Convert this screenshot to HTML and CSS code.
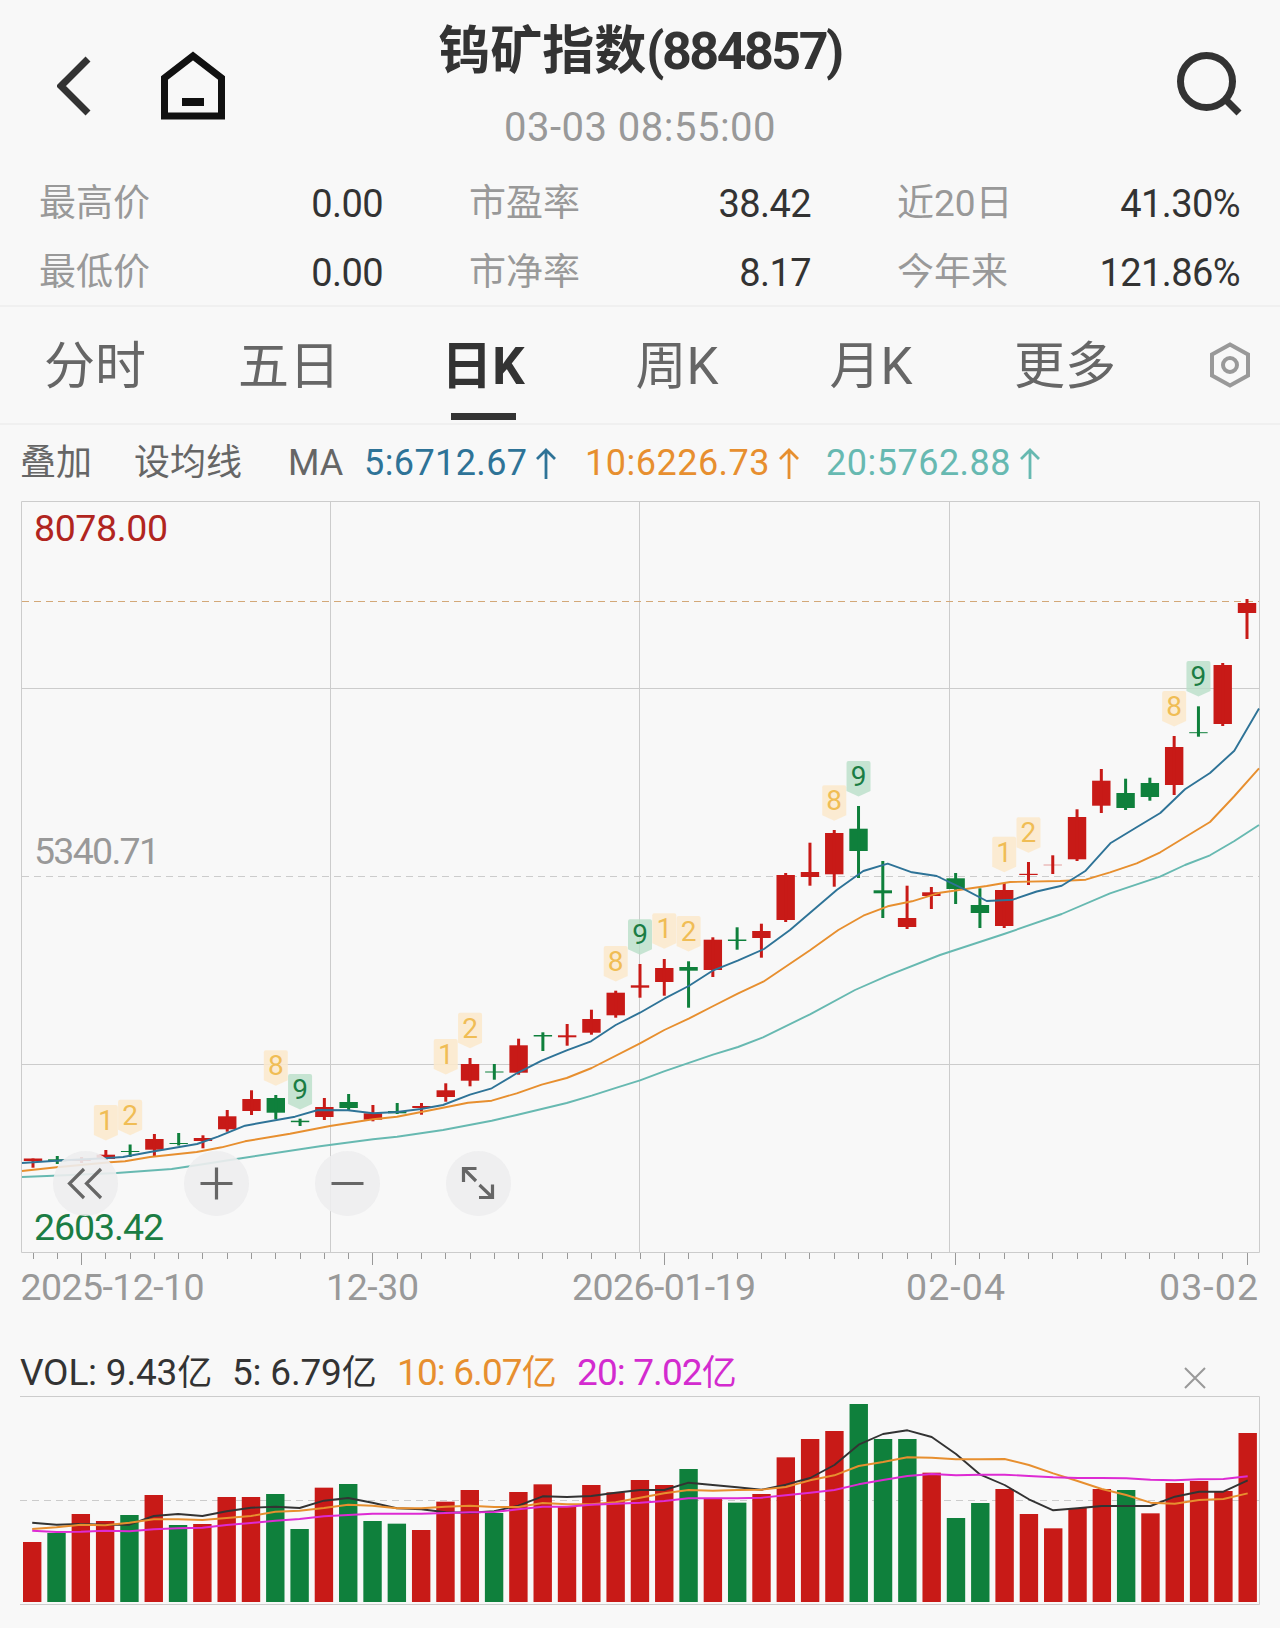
FILE: index.html
```
<!DOCTYPE html>
<html lang="zh-CN">
    <head>
        <meta charset="utf-8" />
        <meta name="viewport" content="width=device-width, initial-scale=1" />
        <title>钨矿指数(884857)</title>
        <link rel="stylesheet" href="styles.css">
    </head>
    <body>
        <div class="header">
            <div class="nav">
                <svg class="back" width="36" height="60" viewBox="0 0 36 60"><path d="M31 3 L4 30 L31 57" /></svg>
                <svg class="home" width="66" height="70" viewBox="0 0 66 70"><path d="M4.5 65 V27 L33 5 L61.5 27 V65 Z" /><path class="door" d="M22 51 H44" /></svg>
            </div>
            <div class="heading">
                <h1>钨矿指数<span>(884857)</span></h1>
                <div class="time">03-03 08:55:00</div>
            </div>
            <svg class="search" width="68" height="68" viewBox="0 0 68 68"><circle cx="30.5" cy="30.5" r="26" /><path d="M49 48 L63 62" /></svg>
        </div>
        <div class="stats">
            <div class="stat"><span>最高价</span><b>0.00</b></div>
            <div class="stat"><span>市盈率</span><b>38.42</b></div>
            <div class="stat"><span>近20日</span><b>41.30%</b></div>
            <div class="stat"><span>最低价</span><b>0.00</b></div>
            <div class="stat"><span>市净率</span><b>8.17</b></div>
            <div class="stat"><span>今年来</span><b>121.86%</b></div>
        </div>
        <div class="tabs">
            <div class="tab">分时</div>
            <div class="tab">五日</div>
            <div class="tab active">日K</div>
            <div class="tab">周K</div>
            <div class="tab">月K</div>
            <div class="tab">更多</div>
            <svg class="setting" width="42" height="46" viewBox="0 0 42 46"><path d="M21 2.5 L39 12.5 V33.5 L21 43.5 L3 33.5 V12.5 Z" /><circle cx="21" cy="23" r="7" /></svg>
        </div>
        <div class="ma-row">
            <span>叠加</span>
            <span>设均线</span>
            <span>MA</span>
            <span class="ma5">5:6712.67<svg class="arrow" width="20" height="32" viewBox="0 0 20 32"><path d="M10 31 V2 M1 11 L10 2 L19 11" /></svg></span>
            <span class="ma10">10:6226.73<svg class="arrow" width="20" height="32" viewBox="0 0 20 32"><path d="M10 31 V2 M1 11 L10 2 L19 11" /></svg></span>
            <span class="ma20">20:5762.88<svg class="arrow" width="20" height="32" viewBox="0 0 20 32"><path d="M10 31 V2 M1 11 L10 2 L19 11" /></svg></span>
        </div>
        <div class="chart">
            <svg width="1280" height="820" viewBox="0 500 1280 820">
                <g class="grid">
                    <path d="M21.5 501.5 H1259.5 V1252.5 H21.5 Z M330.5 502 V1252 M639.5 502 V1252 M949.5 502 V1252 M22 688.5 H1259 M22 1064.5 H1259" />
                    <path class="dash" d="M22 876.5 H1259" />
                    <path class="dash now" d="M22 601.5 H1259" />
                </g>
                <g id="ticks"></g>
                <g id="candles"></g>
                <g id="lines"></g>
                <g id="marks"></g>
                <g class="price">
                    <text class="up" x="34" y="541" textLength="134">8078.00</text>
                    <text x="34" y="864" textLength="126">5340.71</text>
                    <text class="down" x="34" y="1240" textLength="130">2603.42</text>
                </g>
                <g class="dates">
                    <text x="20.5" y="1300" textLength="184">2025-12-10</text>
                    <text x="326" y="1300" textLength="93">12-30</text>
                    <text x="572" y="1300" textLength="184">2026-01-19</text>
                    <text x="906" y="1300" textLength="99">02-04</text>
                    <text x="1159" y="1300" textLength="99">03-02</text>
                </g>
                <g class="tool">
                    <circle cx="85.5" cy="1183.5" r="32.5" />
                    <path d="M84 1169 L69.5 1183.5 L84 1198 M101 1169 L86.5 1183.5 L101 1198" />
                    <circle cx="216.5" cy="1183.5" r="32.5" />
                    <path d="M200.5 1183.5 H232.5 M216.5 1167.5 V1199.5" />
                    <circle cx="347.5" cy="1183.5" r="32.5" />
                    <path d="M331.5 1183.5 H363.5" />
                    <circle cx="478.5" cy="1183.5" r="32.5" />
                    <path d="M476.5 1168.5 H463.5 V1182 M463.5 1168.5 L476 1181 M479.5 1185 L492.5 1197.5 M479 1197.5 H492.5 V1184.5" />
                </g>
            </svg>
        </div>
        <div class="vol-row">
            <span>VOL: 9.43<i>亿</i></span>
            <span>5: 6.79<i>亿</i></span>
            <span class="ma10">10: 6.07<i>亿</i></span>
            <span class="vol20">20: 7.02<i>亿</i></span>
            <svg class="close" width="22" height="22" viewBox="0 0 22 22"><path d="M1 1 L21 21 M21 1 L1 21" /></svg>
        </div>
        <div class="volume">
            <svg width="1280" height="215" viewBox="0 1393 1280 215">
                <g class="grid">
                    <path d="M20 1396.5 H1259.5 V1604.5 H20" />
                    <path class="dash" d="M20 1500.5 H1259" />
                </g>
                <g id="bars"></g>
                <g id="vlines"></g>
            </svg>
        </div>
        <script src="chart.js"></script>
    </body>
</html>
```

FILE: styles.css
```
*{
    box-sizing: border-box;
    padding: 0;
    margin: 0;
}
body{
    width: 1280px;
    height: 1628px;
    overflow: hidden;
    background: #f8f8f8;
    color: #333;
    font-family: Roboto, "Noto Sans CJK SC", sans-serif;
    font-size: 37px;
}
svg{
    display: block;
    fill: none;
}
.header{
    height: 168px;
    display: grid;
    grid-template-columns: 400px 480px 400px;
}
.nav{
    display: flex;
    padding: 51px 0 0 57px;
}
.back{
    margin-top: 5px;
    stroke: #333;
    stroke-width: 7;
}
.home{
    margin-left: 67px;
    stroke: #111;
    stroke-width: 7;
}
.door{
    stroke-width: 8;
}
.search{
    justify-self: end;
    margin: 51px 36px 0 0;
    stroke: #333;
    stroke-width: 7;
}
.heading{
    text-align: center;
}
.heading h1{
    height: 100px;
    line-height: 104px;
    font-size: 52px;
    font-weight: bold;
    white-space: nowrap;
}
.heading h1 span{
    letter-spacing: -2.5px;
}
.time{
    height: 52px;
    line-height: 56px;
    font-size: 40px;
    color: #999;
    letter-spacing: 0.5px;
}
.stats{
    height: 139px;
    display: grid;
    grid-template-columns: 344px 342px 343px;
    column-gap: 86px;
    grid-auto-rows: 69px;
    padding-left: 39px;
    border-bottom: 2px solid #f0f0f0;
}
.stat{
    display: flex;
    justify-content: space-between;
    line-height: 70px;
}
.stat span{
    padding-top: 1px;
    color: #999;
}
.stat b{
    padding-top: 1px;
    font-weight: normal;
    font-size: 38px;
    letter-spacing: -0.6px;
}
.tabs{
    height: 118px;
    display: grid;
    grid-template-columns: repeat(6, 194px) 1fr;
    margin-left: -2px;
    border-bottom: 2px solid #f0f0f0;
}
.tab{
    display: flex;
    flex-direction: column;
    align-items: center;
    height: 116px;
    line-height: 119px;
    font-size: 51px;
    color: #666;
}
.active{
    color: #333;
    font-weight: bold;
}
.active::after{
    content: "";
    width: 65px;
    height: 7px;
    margin-top: -13px;
    background: #333;
}
.setting{
    margin: 35px 0 0 47px;
    stroke: #999;
    stroke-width: 4;
}
.ma-row{
    height: 75px;
    display: grid;
    grid-template-columns: 114px 154px 76px 221px 241px 1fr;
    padding-left: 20px;
    line-height: 77px;
    font-size: 36px;
    color: #666;
}
.ma-row span{
    display: flex;
    align-items: center;
    white-space: nowrap;
}
.arrow{
    margin-left: 9px;
    stroke: currentColor;
    stroke-width: 2.8;
}
.ma-row .ma5{
    color: #2e7397;
    letter-spacing: 0.4px;
}
.ma-row .ma10, .vol-row .ma10{
    color: #e78f2f;
}
.ma-row .ma10, .ma-row .ma20{
    letter-spacing: 0.5px;
}
.ma-row .ma20{
    color: #67b9b1;
}
.grid path{
    stroke: #ccc;
}
.grid .dash{
    stroke-dasharray: 7 5;
}
.grid .now{
    stroke: #d3a878;
}
.tick{
    stroke: #999;
}
.red{
    fill: #c81a17;
}
.green{
    fill: #0f803c;
}
.line{
    stroke-width: 1.9;
    stroke-linejoin: round;
}
.l5{
    stroke: #2e7397;
}
.l10{
    stroke: #e78f2f;
}
.l20{
    stroke: #67b9b1;
}
.v5{
    stroke: #333;
}
.v20{
    stroke: #dd2bd3;
}
.mark{
    fill: #fbe9cb;
    fill-opacity: .85;
}
.mark-nine{
    fill: #b9dec8;
    fill-opacity: .8;
}
.num{
    font-size: 28px;
    text-anchor: middle;
    fill: #f0bd55;
}
.num-nine{
    fill: #1b7d44;
}
.price{
    font-size: 37.5px;
    fill: #999;
}
.price .up{
    fill: #b1251f;
}
.price .down{
    fill: #1b7d44;
}
.dates{
    font-size: 37.5px;
    fill: #999;
}
.tool circle{
    fill: #ededee;
    fill-opacity: .9;
}
.tool path{
    stroke: #666;
    stroke-width: 3.2;
}
.vol-row{
    height: 73px;
    display: grid;
    grid-template-columns: 212px 165px 180px 607px 1fr;
    padding-left: 20px;
    line-height: 105px;
    font-size: 37px;
}
.vol-row span{
    white-space: nowrap;
    letter-spacing: -0.2px;
}
.vol-row i{
    font-style: normal;
    font-size: 35px;
}
.vol-row .ma10{
    letter-spacing: -0.9px;
}
.vol-row .vol20{
    color: #d32bcf;
    letter-spacing: -0.9px;
}
.close{
    margin-top: 47px;
    stroke: #999;
    stroke-width: 2;
}
```

FILE: chart.js
```
// color, body top, body bottom, high, low
const candles = [
    ['r', 1158.5, 1161, 1158.5, 1167.7], ['g', 1159.3, 1161.3, 1156, 1164], ['r', 1159, 1161, 1157, 1163],
    ['r', 1154.7, 1159, 1150, 1160], ['g', 1151, 1152, 1144.5, 1157], ['r', 1139, 1149.7, 1134, 1156],
    ['g', 1143, 1144, 1133, 1145.5], ['r', 1138, 1141, 1135.3, 1148.3], ['r', 1116.3, 1129.3, 1110, 1131.7],
    ['r', 1099, 1111, 1090.3, 1115], ['g', 1098, 1112.7, 1095, 1119.3], ['g', 1120.7, 1122.2, 1118.7, 1126],
    ['r', 1107, 1117, 1098, 1120], ['g', 1102, 1108, 1094, 1110], ['r', 1113.3, 1119.7, 1105, 1121.3],
    ['g', 1111, 1113.3, 1103, 1114], ['r', 1106, 1108, 1103, 1114.7], ['r', 1090.3, 1097, 1083.3, 1101.7],
    ['r', 1064, 1080.7, 1058, 1086.3], ['g', 1071.5, 1072.5, 1064, 1079.7], ['r', 1045.3, 1072.7, 1038.7, 1074.7],
    ['g', 1035, 1036.5, 1032.3, 1051], ['r', 1035.3, 1037.3, 1024, 1045.7], ['r', 1019, 1032.7, 1009.7, 1034.7],
    ['r', 992.7, 1015.3, 990.7, 1017.7], ['r', 985.3, 987.7, 964, 997.7], ['r', 968, 982, 959, 995.7],
    ['g', 967, 970.7, 961.3, 1007.7], ['r', 939.7, 970, 937.3, 977], ['g', 939.5, 941, 927.3, 949.7],
    ['r', 931, 938, 923.7, 957.7], ['r', 875, 920, 873, 922], ['r', 872, 877, 842.7, 885.7],
    ['r', 833, 874.3, 830, 886.7], ['g', 828.7, 851, 806, 878], ['g', 890.3, 893.3, 861, 918],
    ['r', 918, 927, 885.7, 929], ['r', 892.3, 896, 887, 909], ['g', 878.3, 889, 873, 904],
    ['g', 905, 913, 888.3, 928], ['r', 890, 926, 883, 928], ['r', 873.8, 875, 862, 885],
    ['r', 864.8, 865.2, 855.3, 874], ['r', 817, 859.3, 809.3, 861], ['r', 780.7, 805.7, 769, 813],
    ['g', 793, 808, 778.7, 810], ['g', 783, 797, 777.7, 800.7], ['r', 747, 785, 736, 795],
    ['g', 732.2, 733.2, 706.3, 736.7], ['r', 665, 724, 663, 726], ['r', 603, 613, 599, 639]
];

const ma5 = '22,1163 60,1160.5 100,1158.5 123,1157 150,1152 197,1144 218,1136.7 245,1125.7 295,1116.7 318,1110 348,1110.3 373,1113.3 397,1112 421,1109 443,1105 470,1094.7 491.7,1088.3 516.7,1073.3 541.7,1060.7 566.7,1050.3 591,1041.3 615.7,1025 640,1012.7 664.3,998.7 688.7,986 713.3,970.3 737.7,960.7 764,949 790,930 836.7,890 863.3,871 887.7,863.7 912,872.3 936.7,876 965,889.7 986.7,901 1012.7,899.7 1036.7,891.5 1061.7,885.7 1085.7,870.7 1110.3,843.3 1135,828.3 1160.3,813 1185,789.3 1210,773 1234.3,750.7 1259,708.5';
const ma10 = '22,1171 56.7,1167.3 110,1162.3 125,1161.3 150,1157 196.7,1152 221.7,1147.3 245,1141.3 290,1133.7 330,1126 373,1119.3 397,1116.7 443,1107.7 468,1102.7 491.7,1100.7 516.7,1093.3 541.7,1084.7 566.7,1078 591.7,1068 640,1043.3 664.3,1030 688.7,1018.7 713.3,1006 737.7,993.7 763.3,981.7 810,950.3 838.3,930 863.3,915.7 887.7,906.3 912,901.3 940,892.7 986.7,886 1010,882 1060,881 1085.7,879.7 1110,872.3 1136.7,863.3 1160.3,852.3 1210,822 1234,796.5 1259,768.3';
const ma20 = '22,1177 53,1175.7 116.7,1173 171.7,1169 190,1166.3 238,1158.7 320,1146.3 373,1139.3 397,1136.7 443,1130 491.7,1120.7 516.7,1115 566.7,1103 591.7,1095.7 616.7,1087.7 640,1080.3 664,1071.3 713,1054.7 738,1047 763,1037.3 810,1014.3 855,990 887.7,975.7 940,955 1004,934 1061.7,914 1110,893.3 1160,876.7 1185,865 1210,855.3 1234,841.3 1259,825';

// candle index, number, top
const marks = [
    [3, 1, 1105], [4, 2, 1099.7], [10, 8, 1050.3], [11, 9, 1074], [17, 1, 1039], [18, 2, 1012.7],
    [24, 8, 946], [25, 9, 919.3], [26, 1, 913.3], [27, 2, 916], [33, 8, 785.3], [34, 9, 761],
    [40, 1, 836.7], [41, 2, 817.3], [47, 8, 691], [48, 9, 661]
];

const volumes = [
    180, 207, 264, 243, 261, 321, 231, 234, 315, 315, 324, 219, 343, 354, 243, 235, 216, 301, 336, 267, 330, 353, 285, 351, 329, 366,
    351, 399, 310, 298, 324, 434, 489, 513, 594, 489, 489, 388, 252, 297, 339, 264, 221, 282, 339, 336, 266, 357, 363, 333, 507
];
// days that closed lower
const falling = [1, 4, 6, 10, 11, 13, 14, 15, 19, 27, 29, 34, 35, 36, 38, 39, 45];
const vol5 = [
    238, 232, 234, 232, 232, 258, 264, 258, 272, 283, 286, 282, 304, 312, 298, 281, 278, 269, 268, 272, 289, 317, 315, 318, 328, 336,
    336, 358, 351, 344, 337, 352, 372, 411, 472, 504, 515, 495, 444, 382, 351, 308, 275, 281, 288, 288, 288, 316, 331, 331, 365
];
const vol10 = [
    219, 224, 232, 230, 238, 248, 248, 246, 252, 258, 271, 274, 282, 292, 289, 281, 281, 286, 289, 285, 285, 297, 293, 293, 299, 313,
    326, 336, 334, 336, 337, 345, 365, 380, 408, 420, 434, 433, 428, 428, 429, 411, 386, 363, 339, 321, 298, 295, 306, 309, 326
];
const vol20 = [
    214, 210, 211, 214, 212, 218, 221, 223, 231, 237, 244, 249, 257, 261, 265, 265, 265, 267, 269, 270, 278, 286, 286, 292, 295, 298,
    303, 311, 311, 311, 313, 320, 328, 336, 353, 366, 378, 384, 380, 382, 382, 378, 374, 372, 372, 371, 367, 365, 368, 369, 377
];

function add(parent, name, attrs, text) {
    const el = document.createElementNS('http://www.w3.org/2000/svg', name);
    for (const key in attrs) {
        el.setAttribute(key, attrs[key]);
    }
    if (text !== undefined) {
        el.textContent = text;
    }
    document.getElementById(parent).appendChild(el);
}

candles.forEach((c, i) => {
    const x = 33 + i * 24.28;
    const cls = c[0] === 'r' ? 'red' : 'green';
    add('candles', 'rect', { class: cls, x: x - 9.2, y: c[1], width: 18.4, height: c[2] - c[1] });
    add('candles', 'rect', { class: cls, x: x - 1.5, y: c[3], width: 3, height: c[4] - c[3] });

    const tx = Math.floor(x) + 0.5;
    add('ticks', 'path', { class: 'tick', d: 'M' + tx + ' 1253 V' + (i % 12 === 2 ? 1265 : 1259) });
});

add('lines', 'polyline', { class: 'line l20', points: ma20 });
add('lines', 'polyline', { class: 'line l10', points: ma10 });
add('lines', 'polyline', { class: 'line l5', points: ma5 });

marks.forEach(([i, n, y]) => {
    const x = 33 + i * 24.28;
    const nine = n === 9;
    add('marks', 'path', {
        class: nine ? 'mark-nine' : 'mark',
        d: `M${x - 10} ${y} H${x + 10} Q${x + 12} ${y} ${x + 12} ${y + 2} V${y + 30} L${x} ${y + 35.5} L${x - 12} ${y + 30} V${y + 2} Q${x - 12} ${y} ${x - 10} ${y} Z`
    });
    add('marks', 'text', { class: nine ? 'num num-nine' : 'num', x: x, y: y + 25 }, n);
});

volumes.forEach((v, i) => {
    const h = v / 3;
    add('bars', 'rect', {
        class: falling.includes(i) ? 'green' : 'red',
        x: 32.2 + i * 24.31 - 9.2, y: 1602 - h, width: 18.4, height: h
    });
});

function volLine(data, cls) {
    const points = data.map((v, i) => (32.2 + i * 24.31).toFixed(1) + ',' + (1602 - v / 3).toFixed(1));
    add('vlines', 'polyline', { class: 'line ' + cls, points: points.join(' ') });
}
volLine(vol5, 'v5');
volLine(vol10, 'l10');
volLine(vol20, 'v20');
```
